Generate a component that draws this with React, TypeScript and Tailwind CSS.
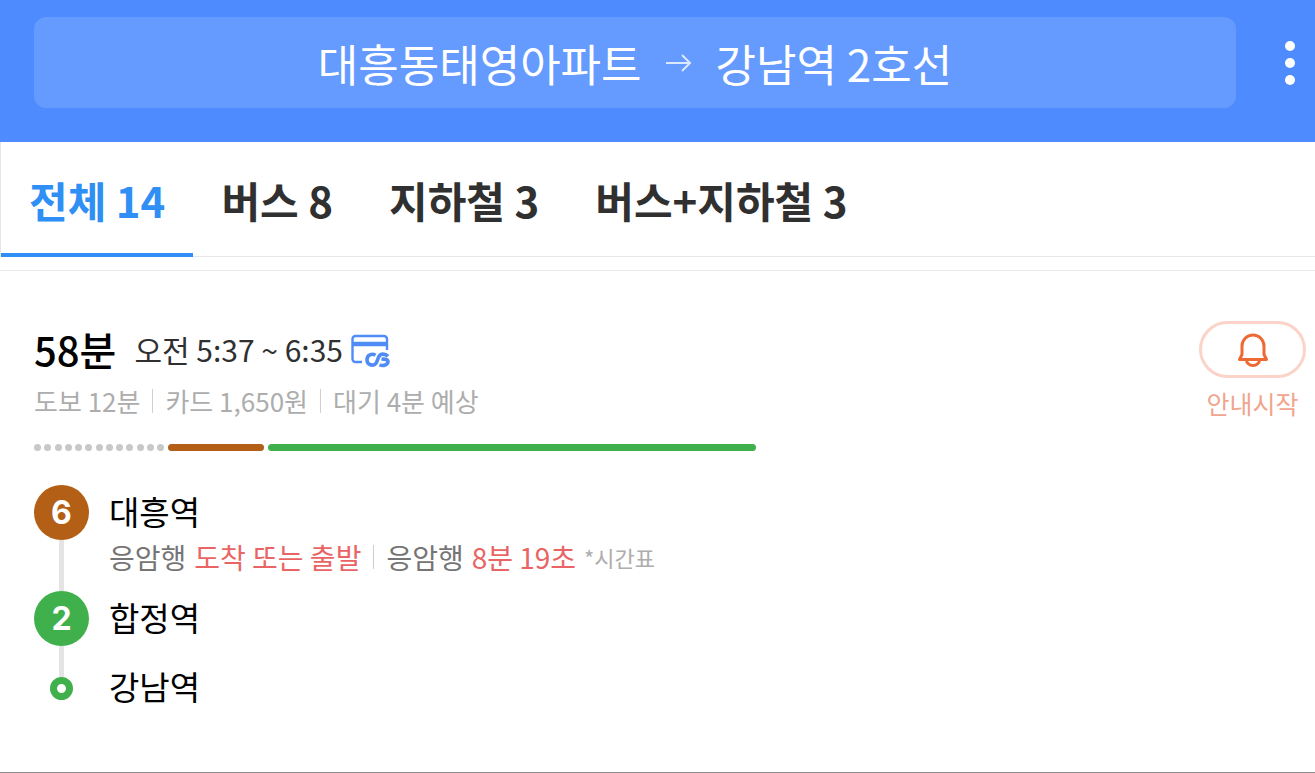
import React from "react";

const tabs = [
  { label: "전체", count: 14 },
  { label: "버스", count: 8 },
  { label: "지하철", count: 3 },
  { label: "버스+지하철", count: 3 },
];

function CardIcon() {
  return (
    <svg width="40" height="34" viewBox="0 0 40 34" fill="none" stroke="#4f8cf5" aria-label="교통카드" role="img">
      <path d="M11 28H4.500a3 3 0 0 1-3-3V5a3 3 0 0 1 3-3H33a3 3 0 0 1 3 3v11" strokeWidth="2.400" />
      <path d="M1.500 10H36" strokeWidth="4.500" />
      <path
        d="M24.500 21.300C21 19 16 21 16 25.700S20.500 32 23.500 30.600C28 28.500 25.500 20.300 31.500 20.100C34 20 36 21.200 37 22.300M28.500 30.800C32.500 32.400 37 30.800 37 27.600C37 24.800 33 25.400 30.500 24.800"
        strokeWidth="3.600"
      />
    </svg>
  );
}

function BellIcon() {
  return (
    <svg width="32" height="34" viewBox="0 0 32 34" fill="none" stroke="#ee6a35" strokeWidth="3" strokeLinejoin="round" aria-hidden="true">
      <path d="M2.500 26.500L5 21.500V13a11 11 0 0 1 22 0V21.500L29.500 26.500z" />
      <path d="M9.500 27a6.500 5.500 0 0 0 13 0" />
    </svg>
  );
}

function Divider() {
  return <span className="h-6 w-px shrink-0 bg-[#cfcfcf]" />;
}

export default function App() {
  return (
    <div className="flex min-h-screen flex-col border-b border-[#8f8f8f] bg-white font-['Noto_Sans_CJK_KR','Noto_Sans',sans-serif] text-black">
      <header className="flex items-start bg-[#4d8bff] pt-[17px] pb-[34px] pl-[34px]">
        <button className="flex h-[91px] min-w-0 flex-1 items-center justify-center gap-6 rounded-xl bg-[#659aff] text-[44px] leading-none whitespace-nowrap text-white">
          <span>대흥동태영아파트</span>
          <svg width="26" height="20" viewBox="0 0 26 20" fill="none" stroke="#dbe8ff" strokeWidth="2" aria-hidden="true">
            <path d="M0 10h24M16 2l8 8-8 8" />
          </svg>
          <span>강남역 2호선</span>
        </button>
        <button aria-label="더보기" className="flex h-[91px] w-[79px] flex-col items-center justify-center gap-[7px] pl-7">
          <span className="size-[10px] rounded-full bg-white" />
          <span className="size-[10px] rounded-full bg-white" />
          <span className="size-[10px] rounded-full bg-white" />
        </button>
      </header>

      <nav className="flex h-[115px] border-b border-l border-[#e6e6e6]">
        {tabs.map((tab, i) => (
          <button
            key={tab.label}
            className={
              i === 0
                ? "-mb-px border-b-4 border-[#2f8ff5] px-7 pt-1 text-[42px] leading-none font-bold whitespace-nowrap text-[#2f8ff5]"
                : "-mb-px border-b-4 border-transparent px-7 pt-1 text-[42px] leading-none font-bold whitespace-nowrap text-[#303030]"
            }
          >
            {tab.label} {tab.count}
          </button>
        ))}
      </nav>

      <main className="mt-[13px] flex-1 border-t border-[#e9e9e9] pt-[50px] pr-[9px] pl-[34px]">
        <div className="flex items-start justify-between">
          <div>
            <div className="flex h-14 items-center">
              <h1 className="text-[40px] leading-none font-medium">58분</h1>
              <p className="ml-[18px] text-[30px] leading-none text-[#303030]">오전 5:37 ~ 6:35</p>
              <span className="ml-2 pt-1">
                <CardIcon />
              </span>
            </div>
            <div className="mt-2 flex h-8 items-center gap-3 text-[26px] leading-none text-[#adadad]">
              <span>도보 12분</span>
              <Divider />
              <span>카드 1,650원</span>
              <Divider />
              <span>대기 4분 예상</span>
            </div>
          </div>
          <button className="flex flex-col items-center">
            <span className="flex h-[57px] w-[107px] items-center justify-center rounded-full border-3 border-[#fbd3c9]">
              <BellIcon />
            </span>
            <span className="mt-[9px] text-[25px] leading-8 text-[#f0a58e]">안내시작</span>
          </button>
        </div>

        <div className="mt-[25px] flex h-[7px] w-[722px] max-w-full gap-1">
          <div className="flex w-[130px] justify-between">
            {Array.from({ length: 13 }, (_, i) => (
              <span key={i} className="size-[7px] rounded-full bg-[#c8c8c8]" />
            ))}
          </div>
          <div className="w-24 rounded-full bg-[#b45f16]" />
          <div className="flex-1 rounded-full bg-[#3fb04b]" />
        </div>

        <ol className="mt-[34px] text-[33px]">
          <li className="flex gap-5">
            <div className="flex w-[55px] flex-col items-center">
              <span className="flex size-[55px] shrink-0 items-center justify-center rounded-full bg-[#b45f16] font-['Inter',sans-serif] text-[32px] font-bold text-white">6</span>
              <span className="w-[5px] flex-1 bg-[#e4e4e4]" />
            </div>
            <div className="pb-[14px]">
              <h2 className="leading-[52px]">대흥역</h2>
              <p className="flex h-10 items-center gap-2 text-[28px] leading-none text-[#757575]">
                <span>응암행</span>
                <span className="text-[#e96565]">도착 또는 출발</span>
                <span className="mx-1 h-6 w-px bg-[#cfcfcf]" />
                <span>응암행</span>
                <span className="text-[#e96565]">8분 19초</span>
                <span className="text-[22px] text-[#adadad]">*시간표</span>
              </p>
            </div>
          </li>
          <li className="flex gap-5">
            <div className="flex w-[55px] flex-col items-center">
              <span className="flex size-[55px] shrink-0 items-center justify-center rounded-full bg-[#3fb04b] font-['Inter',sans-serif] text-[32px] font-bold text-white">2</span>
              <span className="w-[5px] flex-1 bg-[#e4e4e4]" />
            </div>
            <h2 className="pb-[17px] leading-[52px]">합정역</h2>
          </li>
          <li className="flex gap-5">
            <div className="flex w-[55px] flex-col items-center">
              <span className="h-[17px] w-[5px] bg-[#e4e4e4]" />
              <span className="size-[23px] rounded-full border-[7px] border-[#3fb04b] bg-white" />
            </div>
            <h2 className="leading-[52px]">강남역</h2>
          </li>
        </ol>
      </main>
    </div>
  );
}
